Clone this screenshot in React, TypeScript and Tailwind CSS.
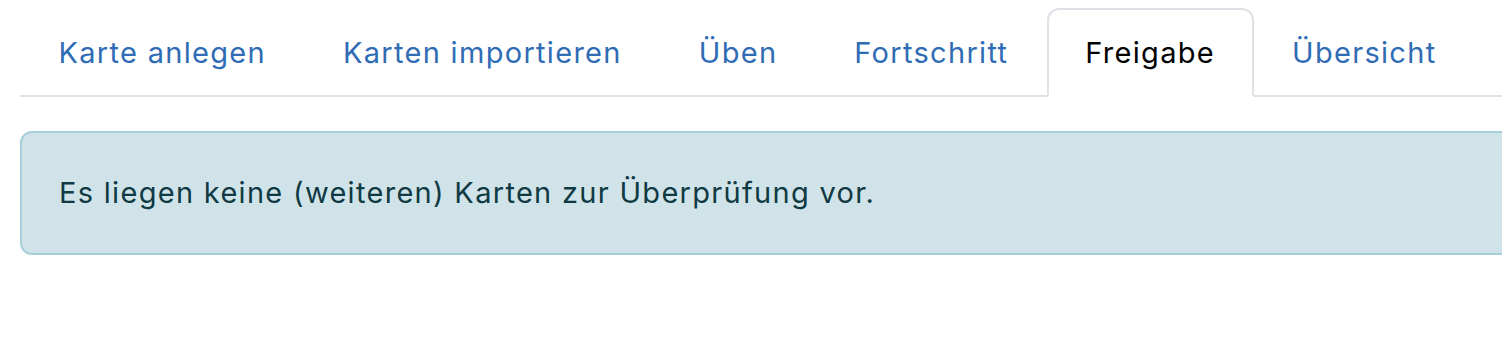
import React from 'react';

const tabs = ['Karte anlegen', 'Karten importieren', 'Üben', 'Fortschritt', 'Freigabe', 'Übersicht'];

export default function App() {
  const active = 'Freigabe';

  return (
    <div className="h-[340px] w-full overflow-hidden bg-white" style={{ fontFamily: 'Inter, "Noto Sans", sans-serif' }}>
      <div className="w-[1540px] pl-[20px] pt-[8px]">
        {/* Tabs */}
        <ul className="flex border-b-2 border-[#dee2e6]">
          {tabs.map((t) => (
            <li key={t} className="-mb-[2px]">
              <a
                href="#"
                className={
                  t === active
                    ? 'block rounded-t-[12px] border-2 border-[#dee2e6] border-b-white bg-white px-[36.5px] py-[21px] text-[29px] leading-[43px] tracking-[1.3px] text-black'
                    : 'block rounded-t-[12px] border-2 border-transparent px-[36.5px] py-[21px] text-[29px] leading-[43px] tracking-[1.3px] text-[#2f6cb5]'
                }
              >
                {t}
              </a>
            </li>
          ))}
        </ul>

        {/* Alert */}
        <div className="mt-[34px] rounded-[12px] border-2 border-[#a6cfd9] bg-[#d0e3e8] px-[37px] py-[37px] text-[29px] leading-[46px] tracking-[1.3px] text-[#0f3a44]">
          Es liegen keine (weiteren) Karten zur Überprüfung vor.
        </div>
      </div>
    </div>
  );
}
